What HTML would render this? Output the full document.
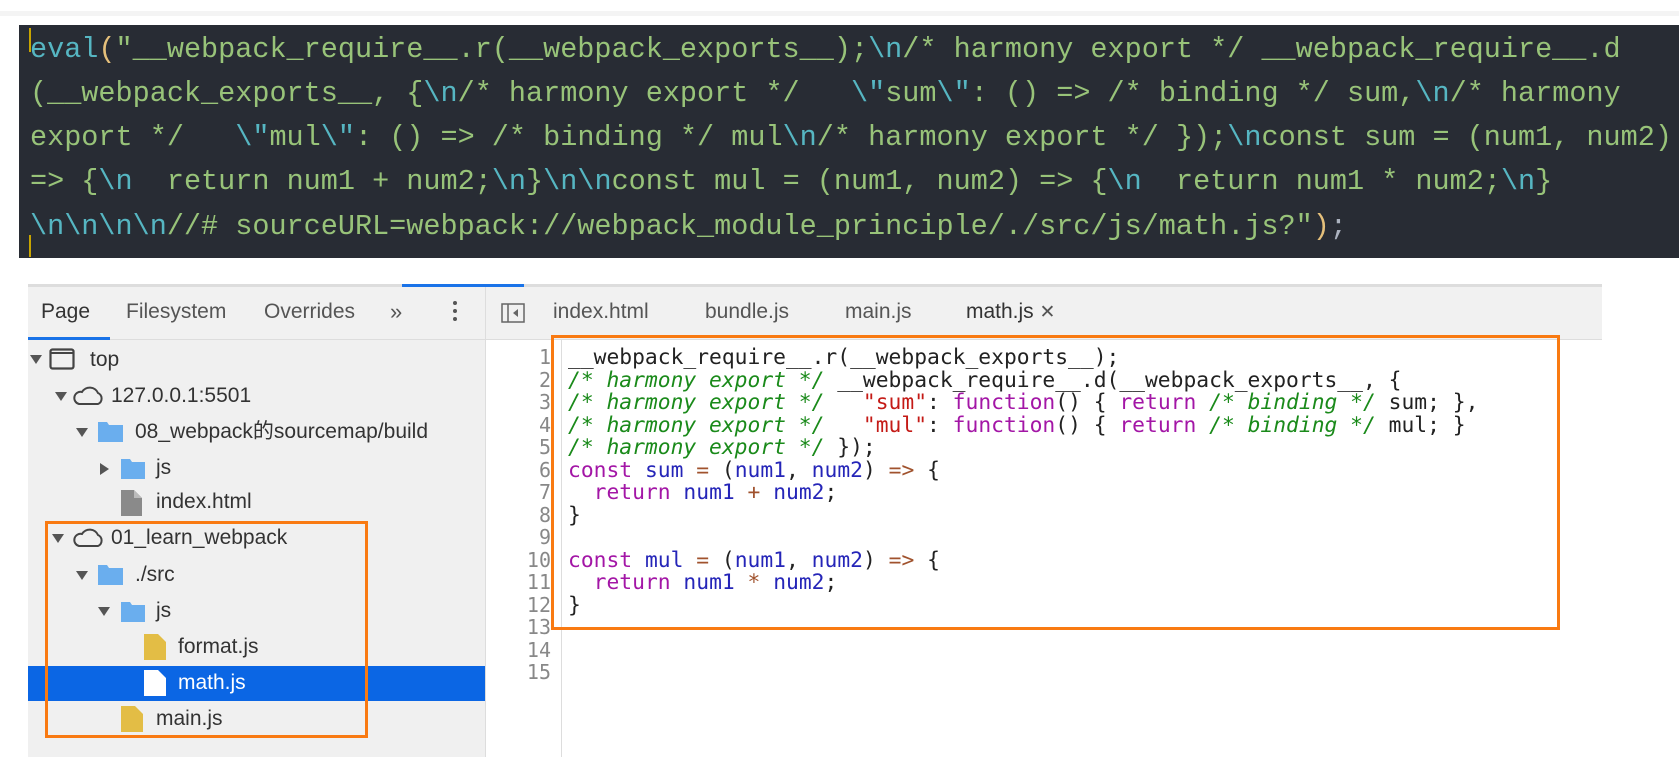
<!DOCTYPE html>
<html><head><meta charset="utf-8">
<style>
*{margin:0;padding:0;box-sizing:border-box}
body{width:1679px;height:778px;background:#fff;position:relative;overflow:hidden;font-family:"Liberation Sans","Noto Sans CJK SC",sans-serif}
.a{position:absolute}
#band{left:0;top:11px;width:1679px;height:5px;background:#f4f4f4}
#dark{left:19px;top:25px;width:1660px;height:233px;background:#282c34}
.dl{position:absolute;left:11px;white-space:pre;font-family:"Liberation Mono",monospace;font-size:28.5px;line-height:44px;color:#98c379;height:44px}
.c{color:#56b6c2}.y{color:#e5c07b}.w{color:#abb2bf}
#dt{left:28px;top:284px;width:1574px;height:56px;background:#f1f1f1;border-top:3px solid #ddd;border-bottom:1px solid #ddd}
#side{left:28px;top:340px;width:458px;height:417px;background:#f0f0f0}
#div{left:485px;top:284px;width:1px;height:473px;background:#ddd}
.tab{position:absolute;font-size:21px;color:#555;top:300px;line-height:24px;white-space:nowrap}
.row{position:absolute;font-size:21px;color:#333;line-height:24px;white-space:nowrap}
.arr{position:absolute;width:0;height:0;border-left:6px solid transparent;border-right:6px solid transparent;border-top:9px solid #555}
.arrr{position:absolute;width:0;height:0;border-top:6px solid transparent;border-bottom:6px solid transparent;border-left:9px solid #555}
.ln{position:absolute;left:486px;width:65px;text-align:right;font-family:"DejaVu Sans Mono",monospace;font-size:20px;line-height:22.5px;color:#888}
.code{position:absolute;left:568px;white-space:pre;font-family:"DejaVu Sans Mono",monospace;font-size:21.3px;line-height:22.5px;color:#222;letter-spacing:0}
.cm{color:#1a8a1a;font-style:italic}.kw{color:#a316a6}.st{color:#c41a16}.id{color:#2525b8}.op{color:#a0522d}
</style></head><body>
<div class="a" id="band"></div>
<div class="a" id="dark">
<div class="a" style="left:10px;top:3px;width:2px;height:24px;background:#c8a400"></div>
<div class="a" style="left:10px;top:210px;width:2px;height:22px;background:#c8a400"></div>
<div class="dl" style="top:3px"><span class="c">eval</span><span class="y">(</span>"__webpack_require__.r(__webpack_exports__);<span class="c">\n</span>/* harmony export */ __webpack_require__.d</div>
<div class="dl" style="top:47px">(__webpack_exports__, {<span class="c">\n</span>/* harmony export */   <span class="c">\"</span>sum<span class="c">\"</span>: () =&gt; /* binding */ sum,<span class="c">\n</span>/* harmony</div>
<div class="dl" style="top:91px">export */   <span class="c">\"</span>mul<span class="c">\"</span>: () =&gt; /* binding */ mul<span class="c">\n</span>/* harmony export */ });<span class="c">\n</span>const sum = (num1, num2)</div>
<div class="dl" style="top:135px">=&gt; {<span class="c">\n</span>  return num1 + num2;<span class="c">\n</span>}<span class="c">\n\n</span>const mul = (num1, num2) =&gt; {<span class="c">\n</span>  return num1 * num2;<span class="c">\n</span>}</div>
<div class="dl" style="top:180px"><span class="c">\n\n\n\n</span>//# sourceURL=webpack://webpack_module_principle/./src/js/math.js?"<span class="y">)</span><span class="w">;</span></div>
</div>

<div class="a" id="dt"></div>
<div class="a" id="side"></div>
<div class="a" id="div"></div>
<div class="a" style="left:402px;top:284px;width:122px;height:3px;background:#1a73e8"></div>
<div class="a" style="left:28px;top:337px;width:82px;height:3px;background:#1a73e8"></div>
<div class="tab" style="left:41px;color:#333">Page</div>
<div class="tab" style="left:126px">Filesystem</div>
<div class="tab" style="left:264px">Overrides</div>
<div class="tab" style="left:390px;font-size:22px">»</div>
<div class="a" style="left:453px;top:301px;width:4px;height:4px;border-radius:2px;background:#555;box-shadow:0 8px 0 #555,0 16px 0 #555"></div>
<svg class="a" style="left:501px;top:303px" width="24" height="20" viewBox="0 0 24 20"><rect x="1" y="1" width="22" height="18" fill="none" stroke="#666" stroke-width="1.5"/><line x1="7" y1="1" x2="7" y2="19" stroke="#666" stroke-width="1.5"/><path d="M17 6 L12 10 L17 14 Z" fill="#666"/></svg>
<div class="tab" style="left:553px">index.html</div>
<div class="tab" style="left:705px">bundle.js</div>
<div class="tab" style="left:845px">main.js</div>
<div class="tab" style="left:966px;color:#333">math.js <span style="font-size:19px;color:#555">✕</span></div>

<!-- tree -->
<div class="a" style="left:28px;top:666px;width:457px;height:35px;background:#0b66e4"></div>
<div class="arr" style="left:30px;top:355px"></div>
<svg class="a" style="left:49px;top:348px" width="26" height="22"><rect x="1.5" y="1.5" width="23" height="19" rx="2" fill="none" stroke="#444" stroke-width="2.2"/><line x1="1.5" y1="5" x2="24.5" y2="5" stroke="#444" stroke-width="2"/></svg>
<div class="row" style="left:90px;top:348px">top</div>
<div class="arr" style="left:55px;top:392px"></div>
<svg class="a" style="left:71px;top:384px" width="34" height="22" viewBox="0 0 34 22"><path d="M8 20 H27 A6 6 0 0 0 27 9 A9 9 0 0 0 11 8 A6 6 0 0 0 8 20 Z" fill="none" stroke="#444" stroke-width="2"/></svg>
<div class="row" style="left:111px;top:384px">127.0.0.1:5501</div>
<div class="arr" style="left:76px;top:428px"></div>
<svg class="a" style="left:98px;top:420px" width="25" height="22"><path d="M0 2 H9 L11 5 H25 V22 H0 Z" fill="#6aaeee"/></svg>
<div class="row" style="left:135px;top:420px">08_webpack的sourcemap/build</div>
<div class="arrr" style="left:100px;top:463px"></div>
<svg class="a" style="left:121px;top:457px" width="24" height="22"><path d="M0 2 H9 L11 5 H24 V22 H0 Z" fill="#6aaeee"/></svg>
<div class="row" style="left:156px;top:456px">js</div>
<svg class="a" style="left:121px;top:490px" width="21" height="26"><path d="M0 0 H13 L21 8 V26 H0 Z" fill="#8a8a8a"/><path d="M13 0 V8 H21" fill="#bbb"/></svg>
<div class="row" style="left:156px;top:490px">index.html</div>
<div class="arr" style="left:52px;top:534px"></div>
<svg class="a" style="left:71px;top:526px" width="34" height="22" viewBox="0 0 34 22"><path d="M8 20 H27 A6 6 0 0 0 27 9 A9 9 0 0 0 11 8 A6 6 0 0 0 8 20 Z" fill="none" stroke="#444" stroke-width="2"/></svg>
<div class="row" style="left:111px;top:526px">01_learn_webpack</div>
<div class="arr" style="left:76px;top:571px"></div>
<svg class="a" style="left:98px;top:563px" width="25" height="22"><path d="M0 2 H9 L11 5 H25 V22 H0 Z" fill="#6aaeee"/></svg>
<div class="row" style="left:135px;top:563px">./src</div>
<div class="arr" style="left:98px;top:607px"></div>
<svg class="a" style="left:121px;top:600px" width="24" height="22"><path d="M0 2 H9 L11 5 H24 V22 H0 Z" fill="#6aaeee"/></svg>
<div class="row" style="left:156px;top:599px">js</div>
<svg class="a" style="left:144px;top:634px" width="22" height="26"><path d="M0 0 H14 L22 8 V26 H0 Z" fill="#e3bd45"/></svg>
<div class="row" style="left:178px;top:635px">format.js</div>
<svg class="a" style="left:144px;top:670px" width="22" height="26"><path d="M0 0 H14 L22 8 V26 H0 Z" fill="#fff"/></svg>
<div class="row" style="left:178px;top:671px;color:#fff">math.js</div>
<svg class="a" style="left:121px;top:706px" width="22" height="26"><path d="M0 0 H14 L22 8 V26 H0 Z" fill="#e3bd45"/></svg>
<div class="row" style="left:156px;top:707px">main.js</div>
<div class="a" style="left:45px;top:521px;width:323px;height:217px;border:3px solid #f97a12"></div>

<!-- editor -->
<div class="a" style="left:561px;top:340px;width:1px;height:417px;background:#ddd"></div>
<div class="ln" style="top:346px">1<br>2<br>3<br>4<br>5<br>6<br>7<br>8<br>9<br>10<br>11<br>12<br>13<br>14<br>15</div>
<div class="code" style="top:347px">__webpack_require__.r(__webpack_exports__);
<span class="cm">/* harmony export */</span> __webpack_require__.d(__webpack_exports__, {
<span class="cm">/* harmony export */</span>   <span class="st">"sum"</span>: <span class="kw">function</span>() { <span class="kw">return</span> <span class="cm">/* binding */</span> sum; },
<span class="cm">/* harmony export */</span>   <span class="st">"mul"</span>: <span class="kw">function</span>() { <span class="kw">return</span> <span class="cm">/* binding */</span> mul; }
<span class="cm">/* harmony export */</span> });
<span class="kw">const</span> <span class="id">sum</span> <span class="op">=</span> (<span class="id">num1</span>, <span class="id">num2</span>) <span class="op">=&gt;</span> {
  <span class="kw">return</span> <span class="id">num1</span> <span class="op">+</span> <span class="id">num2</span>;
}

<span class="kw">const</span> <span class="id">mul</span> <span class="op">=</span> (<span class="id">num1</span>, <span class="id">num2</span>) <span class="op">=&gt;</span> {
  <span class="kw">return</span> <span class="id">num1</span> <span class="op">*</span> <span class="id">num2</span>;
}</div>
<div class="a" style="left:551px;top:335px;width:1009px;height:295px;border:3px solid #f97a12"></div>
</body></html>
